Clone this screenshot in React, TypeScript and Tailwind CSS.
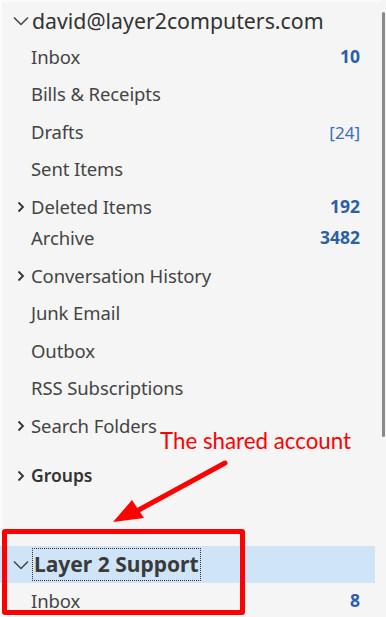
import React from "react";

type Row = { label: string; count?: string; bracket?: boolean; chevron?: boolean; mt: string };

const rows: Row[] = [
  { label: "Inbox", count: "10", mt: "mt-[5px]" },
  { label: "Bills & Receipts", mt: "mt-[13px]" },
  { label: "Drafts", count: "[24]", bracket: true, mt: "mt-[14px]" },
  { label: "Sent Items", mt: "mt-[13px]" },
  { label: "Deleted Items", count: "192", chevron: true, mt: "mt-[14px]" },
  { label: "Archive", count: "3482", mt: "mt-[7px]" },
  { label: "Conversation History", chevron: true, mt: "mt-[14px]" },
  { label: "Junk Email", mt: "mt-[13px]" },
  { label: "Outbox", mt: "mt-[14px]" },
  { label: "RSS Subscriptions", mt: "mt-[13px]" },
  { label: "Search Folders", chevron: true, mt: "mt-[14px]" },
];

const ChevronRight = () => (
  <svg width="8" height="12" viewBox="0 0 8 12" className="block">
    <path d="M1.5 1.5 L6 6 L1.5 10.5" fill="none" stroke="#333" strokeWidth="1.8" />
  </svg>
);

const ChevronDown = () => (
  <svg width="16" height="10" viewBox="0 0 16 10" className="block">
    <path d="M1 1.5 L8 8.5 L15 1.5" fill="none" stroke="#444" strokeWidth="1.5" />
  </svg>
);

export default function App() {
  return (
    <div
      className="relative w-[386px] h-[617px] overflow-hidden bg-[#f5f5f5] flex text-[#444]"
      style={{ fontFamily: '"Noto Sans", "Open Sans", sans-serif' }}
    >
      <div className="flex-1 flex flex-col border-t-[2px] border-l-[2px] border-[#fbfbfb]">
        <div className="h-[38px] flex items-center">
          <div className="w-[30px] flex justify-end pr-[3px]">
            <ChevronDown />
          </div>
          <span className="text-[21.3px] leading-none text-[#333]">david@layer2computers.com</span>
        </div>
        {rows.map((r) => (
          <div key={r.label} className={`${r.mt} h-[24px] flex items-center pr-[22px]`}>
            <div className="w-[29px] flex justify-end pr-[6px]">{r.chevron ? <ChevronRight /> : null}</div>
            <span className="flex-1 text-[18.5px] leading-none tracking-[-0.1px]">{r.label}</span>
            {r.count ? (
              <span
                className={
                  r.bracket
                    ? "text-[17px] leading-none text-[#3b6fba]"
                    : "text-[17.5px] leading-none font-bold text-[#2d5ea8]"
                }
              >
                {r.count}
              </span>
            ) : null}
          </div>
        ))}
        <div className="mt-[26px] h-[24px] flex items-center">
          <div className="w-[29px] flex justify-end pr-[6px]">
            <ChevronRight />
          </div>
          <span className="text-[17.5px] leading-none font-semibold text-[#333]">Groups</span>
        </div>
        <div className="mt-[58px] h-[37px] flex items-center bg-[#cfe4f7] mr-[7px] -ml-[2px] pl-[2px]">
          <div className="w-[30px] flex justify-end pr-[3px]">
            <ChevronDown />
          </div>
          <span className="h-[33px] flex items-center px-[1px] border border-dotted border-[#333] text-[21px] leading-none font-bold text-[#3a3a3a]">
            Layer 2 Support
          </span>
        </div>
        <div className="mt-[6px] h-[24px] flex items-center pr-[22px]">
          <div className="w-[29px]" />
          <span className="flex-1 text-[18.5px] leading-none tracking-[-0.1px]">Inbox</span>
          <span className="text-[17.5px] leading-none font-bold text-[#2d5ea8]">8</span>
        </div>
      </div>
      <div className="w-[4px] flex flex-col">
        <div className="mt-[12px] h-[425px] w-[3px] rounded-full bg-[#8a8a8a]" />
      </div>

      {/* annotation overlay */}
      <div
        className="absolute left-[160px] top-[430px] text-[22.3px] leading-none text-[#ff0000]"
        style={{ fontFamily: 'Lato, "Open Sans", sans-serif' }}
      >
        The shared account
      </div>
      <svg className="absolute left-0 top-0" width="386" height="617" viewBox="0 0 386 617">
        <line x1="225" y1="463" x2="135" y2="512" stroke="#ff0000" strokeWidth="5" strokeLinecap="round" />
        <polygon points="113,522 132,500 144,518" fill="#ff0000" />
      </svg>
      <div className="absolute left-[2px] top-[529px] w-[243px] h-[86px] border-[5px] border-[#ff0000] rounded-[3px]" />
    </div>
  );
}
